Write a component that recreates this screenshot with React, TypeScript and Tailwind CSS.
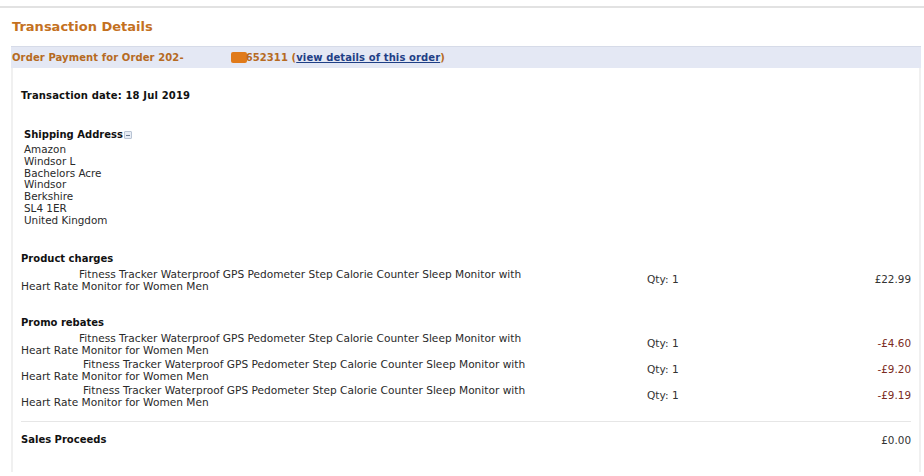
import React from "react";

type Item = { amount: string; lead: number; negative?: boolean };

const PRODUCT: Item[] = [{ amount: "£22.99", lead: 58 }];
const PROMOS: Item[] = [
  { amount: "-£4.60", lead: 58, negative: true },
  { amount: "-£9.20", lead: 62, negative: true },
  { amount: "-£9.19", lead: 62, negative: true },
];

function ItemRow({ item }: { item: Item }) {
  return (
    <div className="flex items-center h-[26px]">
      <div className="w-[626px] text-[10.6px] leading-[12px] text-[#2a2a2a]">
        <span className="inline-block" style={{ width: item.lead }} />
        Fitness Tracker Waterproof GPS Pedometer Step Calorie Counter Sleep Monitor with
        <br />
        Heart Rate Monitor for Women Men
      </div>
      <div className="w-[120px] text-[10.6px] text-[#333]">Qty: 1</div>
      <div
        className={
          "flex-1 text-right text-[10.4px] " +
          (item.negative ? "text-[#7a2b22]" : "text-[#333]")
        }
      >
        {item.amount}
      </div>
    </div>
  );
}

export default function App() {
  return (
    <div className="w-[924px] h-[476px] overflow-hidden bg-white font-['DejaVu_Sans',sans-serif] text-[#111]">
      <div className="pt-[6px]">
        <div className="border-t-2 border-[#e2e2e2]" />
      </div>

      <div className="px-[11px] pr-[3px]">
        <h1 className="mt-[10px] ml-[1px] text-[13px] leading-[18px] font-bold text-[#c4711f]">
          Transaction Details
        </h1>

        <div className="mt-[10px] h-[22px] flex items-center bg-[#e4e8f4] border-t border-[#d6dbe8] pl-[1px] text-[10px] tracking-[0.1px] font-bold text-[#b66a22]">
          <span>Order Payment for Order 202-</span>
          <span className="inline-block w-[47px]" />
          <span className="inline-block w-[16px] h-[11px] bg-[#e07a1a] rounded-[2px] -mr-[1px]" />
          <span>652311 (</span>
          <a className="text-[#1f3f86] underline">view details of this order</a>
          <span>)</span>
        </div>

        <div className="h-[404px] border-l-2 border-r-2 border-[#f0f0f0] pl-[8px] pr-[8px]">
          <div className="pt-[22px] text-[10px] tracking-[0.15px] font-bold leading-[12px]">
            Transaction date: 18 Jul 2019
          </div>

          <div className="mt-[27px] ml-[3px]">
            <div className="flex items-center text-[10px] font-bold leading-[12px]">
              Shipping Address
              <span className="ml-[1px] inline-flex h-[8px] w-[8px] items-center justify-center rounded-[1px] border border-[#b9c4d4] bg-[#e8edf5]">
                <span className="block h-[1px] w-[4px] bg-[#6b7a90]" />
              </span>
            </div>
            <div className="mt-[3px] text-[10.4px] leading-[11.8px] text-[#2a2a2a]">
              <div>Amazon</div>
              <div>Windsor L</div>
              <div>Bachelors Acre</div>
              <div>Windsor</div>
              <div>Berkshire</div>
              <div>SL4 1ER</div>
              <div>United Kingdom</div>
            </div>
          </div>

          <div className="mt-[26px] text-[10px] font-bold leading-[12px]">Product charges</div>
          <div className="mt-[2px]">
            {PRODUCT.map((item, i) => (
              <ItemRow key={i} item={item} />
            ))}
          </div>

          <div className="mt-[24px] text-[10px] font-bold leading-[12px]">Promo rebates</div>
          <div className="mt-[2px]">
            {PROMOS.map((item, i) => (
              <ItemRow key={i} item={item} />
            ))}
          </div>

          <div className="mt-[12px] border-t border-[#e6e6e6]" />

          <div className="flex items-center pt-[12px] leading-[12px]">
            <div className="flex-1 text-[10px] font-bold">Sales Proceeds</div>
            <div className="text-[10.4px] text-[#333]">£0.00</div>
          </div>
        </div>
      </div>
    </div>
  );
}
